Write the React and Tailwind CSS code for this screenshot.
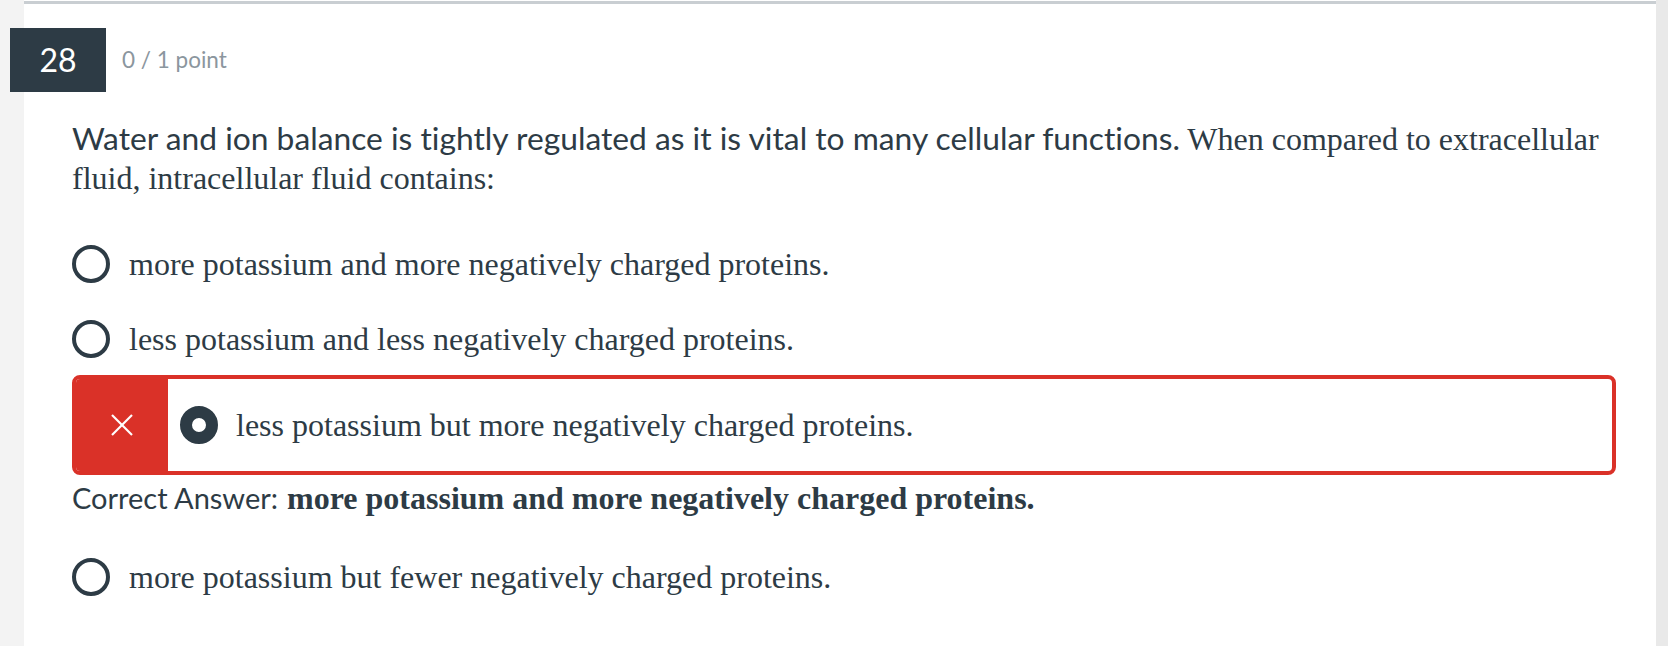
import React from "react";

const serif = { fontFamily: '"Liberation Serif", "Times New Roman", serif' };

function Radio({ checked }) {
  return checked ? (
    <span className="block w-[38px] h-[38px] shrink-0 rounded-full border-[12px] border-[#2d3b45] bg-white" />
  ) : (
    <span className="block w-[38px] h-[38px] shrink-0 rounded-full border-[4px] border-[#2d3b45] bg-white" />
  );
}

function Option({ text, className = "" }) {
  return (
    <div className={"flex items-center h-[50px] " + className}>
      <Radio />
      <span className="ml-[19px] text-[32px] leading-[38px] text-[#2d3b45]" style={serif}>{text}</span>
    </div>
  );
}

export default function App() {
  return (
    <div className="w-[1668px] h-[646px] flex bg-white overflow-hidden font-['Lato',sans-serif] text-[#2d3b45] [font-variant-ligatures:none]">
      <div className="w-[24px] shrink-0 bg-[#f3f3f3]" />
      <div className="w-[1632px] shrink-0 flex flex-col">
        <div className="mt-[1px] h-[3px] bg-[#c9ced2]" />
        <div className="flex items-center mt-[24px] -ml-[14px]">
          <div className="w-[96px] h-[64px] bg-[#2d3b45] flex items-center justify-center text-white text-[32px] leading-none relative z-10">
            28
          </div>
          <div className="ml-[16px] text-[22.5px] text-[#8b969e]">0 / 1 point</div>
        </div>
        <div className="pl-[48px] pr-[40px] flex flex-col">
          <p className="mt-[27px] text-[32px] leading-[38px]">
            <span className="text-[31.75px]">Water and ion balance is tightly regulated as it is vital to many cellular functions.</span>
            <span style={serif}> When compared to extracellular fluid, intracellular fluid contains:</span>
          </p>
          <Option className="mt-[42px]" text="more potassium and more negatively charged proteins." />
          <Option className="mt-[25px]" text="less potassium and less negatively charged proteins." />
          <div className="mt-[11px] h-[100px] w-[1544px] flex border-[4px] border-[#da3128] rounded-[8px] overflow-hidden">
            <div className="w-[92px] shrink-0 bg-[#da3128] flex items-center justify-center">
              <svg width="24" height="24" viewBox="0 0 24 24" fill="none" stroke="white" strokeWidth="2.2">
                <line x1="2" y1="2" x2="22" y2="22" />
                <line x1="22" y1="2" x2="2" y2="22" />
              </svg>
            </div>
            <div className="flex items-center pl-[12px]">
              <Radio checked />
              <span className="ml-[18px] text-[32px] leading-[38px]" style={serif}>
                less potassium but more negatively charged proteins.
              </span>
            </div>
          </div>
          <div className="mt-[4px] flex items-center h-[38px]">
            <span className="text-[29px] leading-[38px]">Correct Answer:</span>
            <span className="ml-[9px] text-[32px] leading-[38px] font-bold" style={serif}>
              more potassium and more negatively charged proteins.
            </span>
          </div>
          <Option className="mt-[35px]" text="more potassium but fewer negatively charged proteins." />
        </div>
      </div>
      <div className="flex-1 bg-[#e9e9e9]" />
    </div>
  );
}
